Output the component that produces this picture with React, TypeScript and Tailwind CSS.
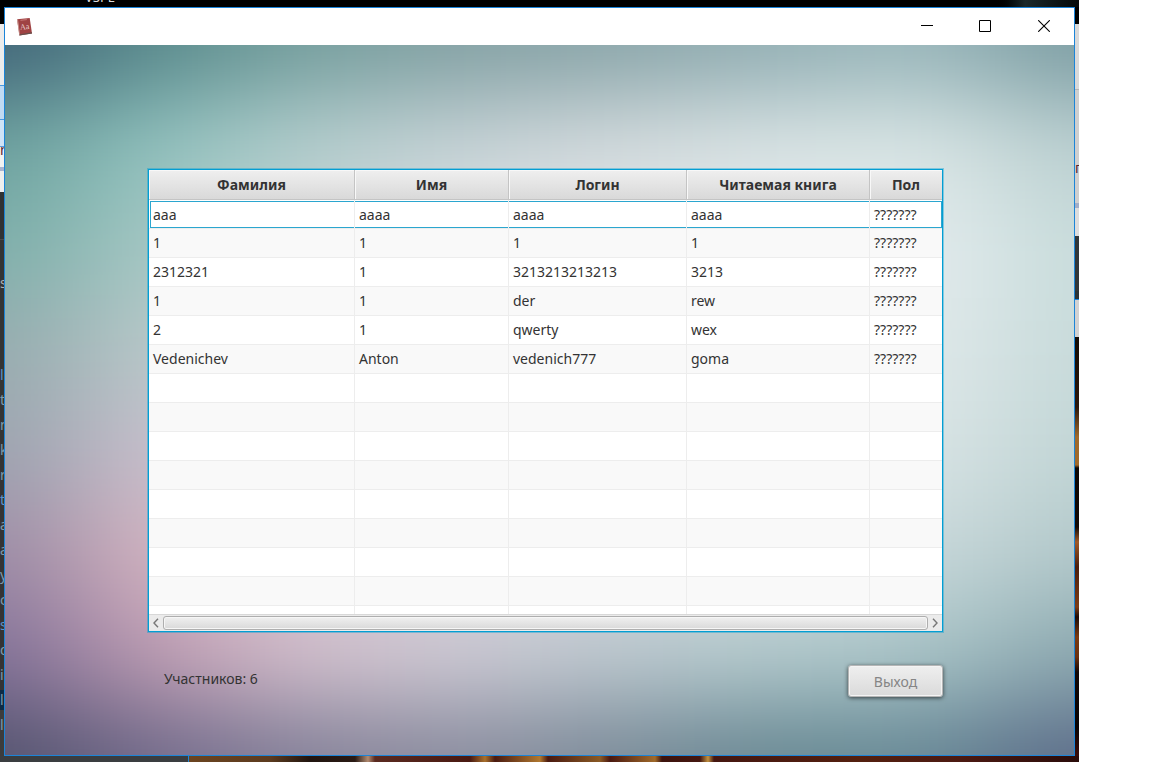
import React from "react";

const columns = [
  { title: "Фамилия", width: "w-[206px]" },
  { title: "Имя", width: "w-[154px]" },
  { title: "Логин", width: "w-[178px]" },
  { title: "Читаемая книга", width: "w-[183px]" },
  { title: "Пол", width: "w-[72px]" },
];

const people = [
  ["aaa", "aaaa", "aaaa", "aaaa", "???????"],
  ["1", "1", "1", "1", "???????"],
  ["2312321", "1", "3213213213213", "3213", "???????"],
  ["1", "1", "der", "rew", "???????"],
  ["2", "1", "qwerty", "wex", "???????"],
  ["Vedenichev", "Anton", "vedenich777", "goma", "???????"],
];

const emptyRows = Array.from({ length: 9 }, () => ["", "", "", "", ""]);

const codeLetters = ["l", "t", "m", "k", "r", "t", "a", "a", "y", "c", "s", "d", "i", "l", "l"];

// Colours of the soft wallpaper, row by row, blended by a blur.
const mesh = [
  ["#416478", "#5a8c8d", "#77a09f", "#84a1a4", "#8ba6aa", "#93afb4", "#9bb8bc", "#7b9ca2"],
  ["#6ca19e", "#92c3bf", "#b5cece", "#c6d2d6", "#d3dadd", "#d9e3e4", "#d9e5e5", "#bacfd0"],
  ["#7eafaa", "#a5c8c4", "#c4d0d2", "#dde3e6", "#e3e8ea", "#e4eaec", "#e4ecee", "#c8dcdb"],
  ["#96abae", "#b9c9ca", "#ccd2d6", "#dde3e6", "#e3e8ea", "#e4eaec", "#e0e9ea", "#c7dada"],
  ["#9ca3af", "#c9bfcd", "#d0ccd6", "#dcdfe6", "#dfe4e8", "#dfe7e9", "#d9e4e5", "#c1d5d5"],
  ["#9c8ba5", "#d6b4c0", "#d2c2ce", "#d4d0da", "#d5d8de", "#d3dde0", "#c8d8da", "#b2c8ca"],
  ["#827198", "#bf9cb2", "#d3c0cd", "#ccc9d3", "#bbc8ce", "#b2c9cc", "#a9c4c7", "#8ba8af"],
  ["#53536e", "#736b8c", "#86839a", "#8b8d9f", "#7b8b99", "#688893", "#688a96", "#5c6b89"],
];

function Wallpaper() {
  return (
    <svg
      className="absolute inset-0 h-full w-full"
      viewBox="0 0 1071 707"
      preserveAspectRatio="none"
      aria-hidden="true"
    >
      <defs>
        <filter id="soft" filterUnits="userSpaceOnUse" x="-300" y="-250" width="1671" height="1207" colorInterpolationFilters="sRGB">
          <feGaussianBlur stdDeviation="66 42" />
        </filter>
      </defs>
      <g filter="url(#soft)" shapeRendering="crispEdges">
        {mesh.map((row, r) =>
          row.map((color, c) => {
            const left = c === 0 ? -300 : c * 153 - 76;
            const right = c === 7 ? 1371 : c * 153 + 77;
            const top = r === 0 ? -250 : r * 101 - 50;
            const bottom = r === 7 ? 957 : r * 101 + 51;
            return <rect key={`${r}-${c}`} x={left} y={top} width={right - left} height={bottom - top} fill={color} />;
          })
        )}
      </g>
    </svg>
  );
}

function BookIcon() {
  return (
    <svg width="18" height="20" viewBox="0 0 18 20" aria-hidden="true">
      <path d="M1 2.3 13.7 1 16 16.4 3.4 18.6Z" fill="#9f4243" />
      <path d="M1 2.3 3.4 18.6 3.8 17.3 2 2.2Z" fill="#d0a19b" />
      <path d="M3.4 18.6 16 16.4V15.2L3.7 17.3Z" fill="#65504c" />
      <path d="M4.5 3.3 10.8 2.6" stroke="#ca7a78" strokeWidth="1" />
      <text x="4" y="12.5" fontSize="8" fontFamily="Liberation Serif, serif" fill="#ecd3d2" transform="rotate(-5 8 10)">Aa</text>
    </svg>
  );
}

function TitleBar() {
  return (
    <header className="flex h-[37px] shrink-0 items-center bg-white pl-[11px]">
      <BookIcon />
      <div className="ml-auto flex h-9 self-start">
        <button aria-label="Свернуть" className="grid w-[58px] place-items-center">
          <svg width="12" height="12" viewBox="0 0 12 12"><path d="M0 5.5H12" stroke="#000" /></svg>
        </button>
        <button aria-label="Развернуть" className="grid w-[58px] place-items-center">
          <svg width="12" height="12" viewBox="0 0 12 12"><path d="M.5.5H11.5V11.5H.5Z" stroke="#000" fill="none" /></svg>
        </button>
        <button aria-label="Закрыть" className="grid w-[60px] place-items-center">
          <svg width="12" height="12" viewBox="0 0 12 12"><path d="M.2.2 11.8 11.8M11.8.2.2 11.8" stroke="#000" strokeWidth="1.1" /></svg>
        </button>
      </div>
    </header>
  );
}

function MembersTable() {
  return (
    <div className="flex h-[463px] flex-col overflow-hidden border border-[#039ed3] bg-white shadow-[0_0_0_1px_#039ed366]">
      <div className="flex-1 overflow-hidden">
        <table className="w-full table-fixed border-separate border-spacing-0 text-left">
          <thead>
            <tr>
              {columns.map((column, i) => (
                <th
                  key={column.title}
                  className={`${column.width} h-[30px] border-b border-[#c4c4c4] bg-linear-to-b from-[#efefef] to-[#d9d9d9] p-0 text-center font-bold shadow-[inset_1px_1px_0_#f8f8f8] ${i < 4 ? "border-r" : ""}`}
                >
                  {column.title}
                </th>
              ))}
            </tr>
          </thead>
          <tbody>
            {[...people, ...emptyRows].map((row, r) => (
              <tr key={r} className={r % 2 ? "bg-[#f9f9f9]" : "bg-white"}>
                {row.map((value, c) => (
                  <td key={c} className={`h-[29px] border-b border-[#ededed] p-0 ${c < 4 ? "border-r" : ""}`}>
                    <div
                      className={
                        r === 0
                          ? `mt-px h-[27px] border-y border-[#2ba6cf] leading-[25px] ${c === 0 ? "ml-px border-l pl-[2px]" : "pl-1"} ${c === 4 ? "border-r" : ""}`
                          : "h-7 pl-1 leading-7"
                      }
                    >
                      {value}
                    </div>
                  </td>
                ))}
              </tr>
            ))}
          </tbody>
        </table>
      </div>
      <div className="flex h-[17px] shrink-0 items-center border-t border-[#d8d8d8] bg-[#ebebeb]">
        <button aria-label="Прокрутить влево" className="grid h-full w-[14px] place-items-center">
          <svg width="6" height="10" viewBox="0 0 6 10"><path d="M5 .8 1 5 5 9.2" stroke="#777" strokeWidth="1.4" fill="none" /></svg>
        </button>
        <div className="h-[14px] flex-1 rounded-[3px] border border-[#aeaeae] bg-linear-to-b from-[#f0f0f0] to-[#d9d9d9] shadow-[inset_0_0_0_1px_#f6f6f6]" />
        <button aria-label="Прокрутить вправо" className="grid h-full w-[14px] place-items-center">
          <svg width="6" height="10" viewBox="0 0 6 10"><path d="M1 .8 5 5 1 9.2" stroke="#777" strokeWidth="1.4" fill="none" /></svg>
        </button>
      </div>
    </div>
  );
}

export default function App() {
  return (
    <div className="min-h-screen bg-white pr-[73px] font-['Noto_Sans',sans-serif] text-[14px] text-[#333]">
      <div className="grid min-h-screen grid-cols-[4px_1fr_4px] grid-rows-[7px_1fr_6px]">
        <div className="col-span-3 overflow-hidden bg-linear-to-r from-black from-92% via-[#1b2829] via-95% to-[#050808] pl-[85px] text-[13px] leading-[18px] text-[#ddd]">
          <div className="-mt-3">VSPE</div>
        </div>

        <div
          aria-hidden="true"
          className="overflow-hidden bg-[linear-gradient(to_bottom,#000_0_17px,#ececec_17px_78px,#4b9ae0_78px_79px,#c0daf3_79px_112px,#4b9ae0_112px_113px,#cfe3f7_113px_139px,#5f9ddb_139px_140px,#f2f2f2_140px_160px,#aab4d0_160px_164px,#efefef_164px_185px,#303234_185px_232px,#4a4a4a_232px_233px,#343434_233px_683px,#0d2b45_683px_703px,#3c3c3c_703px)] text-[14px] leading-[25px] text-[#7f9aaa]"
        >
          <div className="mt-[130px] text-[#5a2430]">n</div>
          <div className="mt-[108px] text-[#b0b0b0]">s</div>
          <div className="mt-[67px]">
            {codeLetters.map((letter, i) => (
              <div key={i} className={i % 5 === 0 ? "text-[#5d93c8]" : ""}>{letter}</div>
            ))}
          </div>
        </div>

        <main className="flex flex-col border border-[#1b84d8]">
          <TitleBar />
          <div className="relative isolate flex flex-1 flex-col items-center overflow-hidden pt-[124px] pl-3">
            <Wallpaper />
            <div className="relative w-[795px]">
              <MembersTable />
              <div className="mt-[33px] flex items-start justify-between pl-4">
                <p className="mt-1 leading-5">Участников: 6</p>
                <button className="h-8 w-[95px] rounded-[3px] border border-[#b5b5b5] bg-linear-to-b from-[#efefef] to-[#dadada] text-[#858585] shadow-[inset_0_0_0_1px_#f4f4f4,0_1px_4px_#000000a0]">
                  Выход
                </button>
              </div>
            </div>
          </div>
        </main>

        <div
          aria-hidden="true"
          className="overflow-hidden bg-[linear-gradient(to_bottom,#000_0_17px,#d9d9d9_17px_82px,#b5b5b5_82px_83px,#cfcfcf_83px_196px,#a3aec8_196px_201px,#ddd_201px_229px,#303638_229px_284px,#2a3336_284px_292px,#1b84d8_292px_293px,#d2d2d2_293px_330px,#120b06_330px,#2a160b_400px,#a06a2c_430px_458px,#0a0503_461px,#120804_520px,#a05a28_535px,#4a1d0c_560px,#7c3c17_600px,#1c0a06_610px,#7a3a12_630px,#6b3010_650px,#120605_665px,#080303_720px,#3a0d0a_748px)]"
        >
          <div className="mt-[148px] leading-[25px] text-[#5a2430]">г</div>
        </div>

        <div
          aria-hidden="true"
          className="col-span-3 bg-[linear-gradient(to_right,#3a3d40_0_188px,#1b84d8_188px_189px,#6b4420_189px,#5c3b1f_270px,#21150f_310px,#2a1a14_355px,#b08a70_368px,#5a2a20_375px,#4a1a12_470px,#a8702c_485px,#4a1a10_495px,#b0782f_540px,#4a1a10_548px,#8a5a25_600px,#4a1810_610px,#a06a2a_655px,#3d130d_662px,#451710_700px,#c09040_708px,#451710_714px,#54200f_860px,#4c1a12_960px,#2a0c0a_1079px)]"
        />
      </div>
    </div>
  );
}
